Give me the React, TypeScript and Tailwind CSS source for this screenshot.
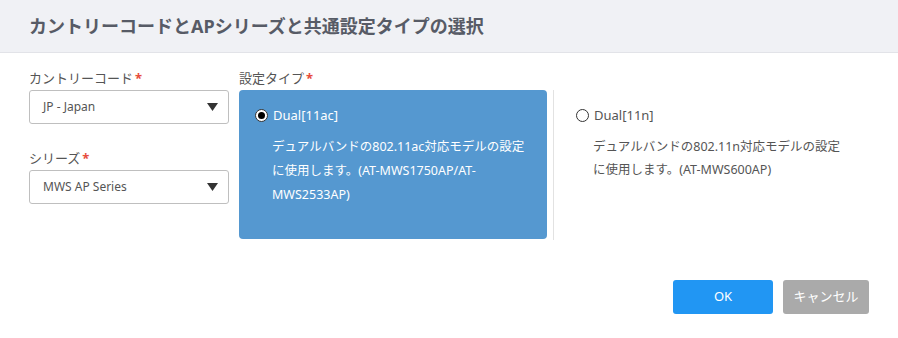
import React from "react";

const font = { fontFamily: '"Segoe UI", "Noto Sans", "Noto Sans CJK JP", sans-serif' };

function Select({ value }: { value: string }) {
  return (
    <div className="flex h-[34px] w-[200px] items-center justify-between rounded-[3px] border border-[#bfbfbf] bg-white pl-[13px] pr-[10px]">
      <span className="text-[12px] text-[#555]">{value}</span>
      <svg width="11" height="8" viewBox="0 0 11 8">
        <path d="M0 0H11L5.5 8Z" fill="#333" />
      </svg>
    </div>
  );
}

function Radio({ checked }: { checked: boolean }) {
  return (
    <span className="flex h-[13px] w-[13px] items-center justify-center rounded-full border border-[#333] bg-white">
      {checked && <span className="h-[7px] w-[7px] rounded-full bg-black" />}
    </span>
  );
}

export default function App() {
  return (
    <div className="h-[338px] w-[898px] bg-white" style={font}>
      <div className="flex h-[53px] items-center border-b border-[#e2e3e8] bg-[#f0f1f5] pl-[29px]">
        <h1 className="text-[18px] font-bold text-[#575b66]">カントリーコードとAPシリーズと共通設定タイプの選択</h1>
      </div>
      <div className="flex pl-[29px] pt-[15px]">
        <div className="flex w-[210px] flex-col">
          <label className="flex h-[22px] items-center text-[13px] text-[#555]">
            カントリーコード<span className="ml-[2px] font-bold text-[#e74c3c]">*</span>
          </label>
          <Select value="JP - Japan" />
          <label className="mt-[24px] flex h-[22px] items-center text-[13px] text-[#555]">
            シリーズ<span className="ml-[2px] font-bold text-[#e74c3c]">*</span>
          </label>
          <Select value="MWS AP Series" />
        </div>
        <div className="flex flex-col">
          <label className="flex h-[22px] items-center text-[13px] text-[#555]">
            設定タイプ<span className="ml-[2px] font-bold text-[#e74c3c]">*</span>
          </label>
          <div className="flex">
            <div className="h-[149px] w-[308px] rounded-[4px] bg-[#5598d0] pl-[16px] pr-[14px] pt-[16px] text-white">
              <div className="flex items-center gap-[5px] text-[13px]">
                <Radio checked />
                <span>Dual[11ac]</span>
              </div>
              <p className="mt-[9px] pl-[17px] text-[12.5px] leading-[24px]">
                デュアルバンドの802.11ac対応モデルの設定に使用します。(AT-MWS1750AP/AT-MWS2533AP)
              </p>
            </div>
            <div className="ml-[6px] h-[150px] w-px bg-[#e2e2e2]" />
            <div className="w-[300px] pl-[22px] pt-[16px] text-[#555]">
              <div className="flex items-center gap-[5px] text-[13px]">
                <Radio checked={false} />
                <span>Dual[11n]</span>
              </div>
              <p className="mt-[9px] w-[269px] pl-[17px] text-[12.5px] leading-[23px]">
                デュアルバンドの802.11n対応モデルの設定に使用します。(AT-MWS600AP)
              </p>
            </div>
          </div>
        </div>
      </div>
      <div className="mt-[40px] flex justify-end gap-[10px] pr-[29px]">
        <button className="h-[34px] w-[100px] rounded-[3px] bg-[#2196f3] text-[13px] text-white">OK</button>
        <button className="h-[34px] w-[86px] rounded-[3px] bg-[#aaaaaa] text-[13px] text-white">キャンセル</button>
      </div>
    </div>
  );
}
